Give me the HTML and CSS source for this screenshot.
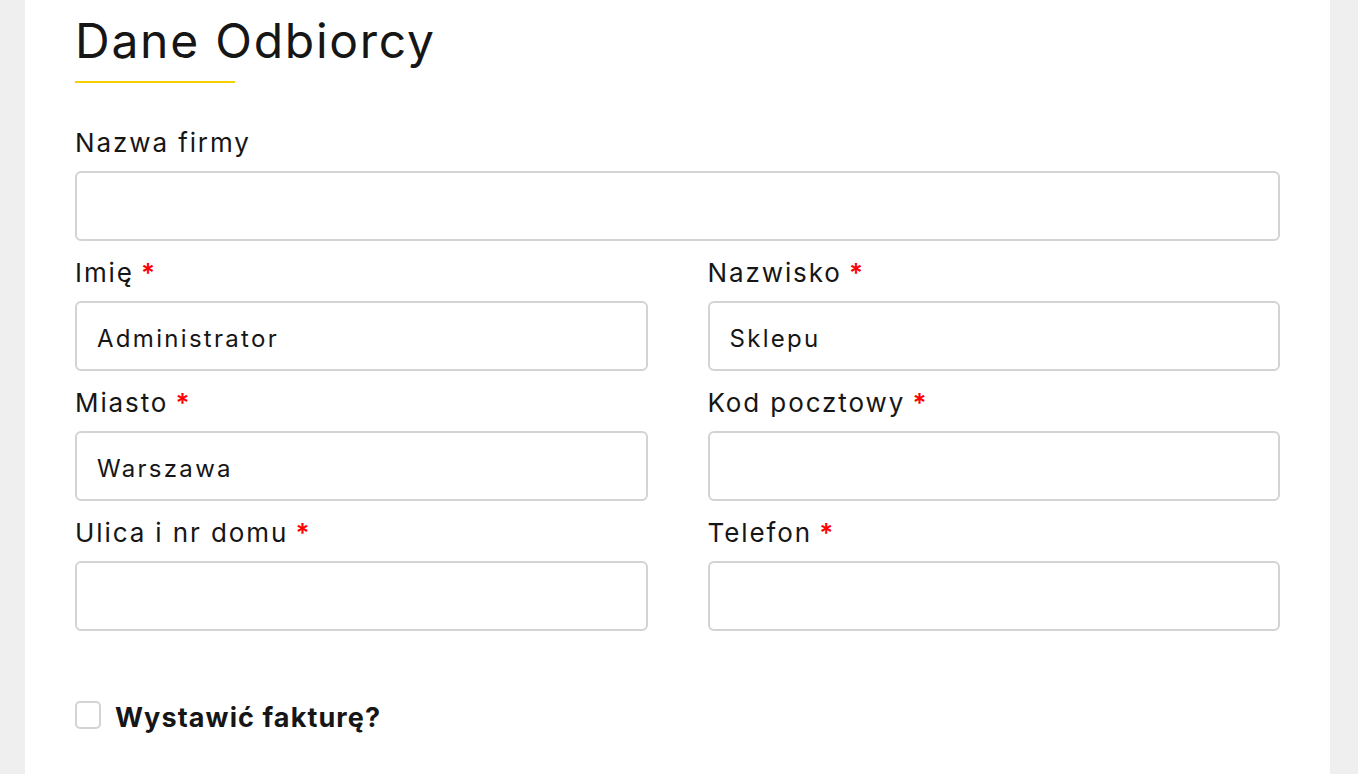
FILE: index.html
```html
<!DOCTYPE html>
<html lang="pl">
<head>
    <meta charset="UTF-8">
    <meta name="viewport" content="width=device-width, initial-scale=1.0">
    <title>Dane Odbiorcy</title>
    <link rel="stylesheet" href="styles.css">
</head>
<body>
    <div class="panel">
        <h2 class="section-title">Dane Odbiorcy</h2>

        <div class="field first">
            <label for="company">Nazwa firmy</label>
            <input id="company" type="text">
        </div>

        <div class="row">
            <div class="field">
                <label for="firstName">Imię <span class="req">*</span></label>
                <input id="firstName" type="text" value="Administrator">
            </div>
            <div class="field">
                <label for="lastName">Nazwisko <span class="req">*</span></label>
                <input id="lastName" type="text" value="Sklepu">
            </div>
        </div>

        <div class="row">
            <div class="field">
                <label for="city">Miasto <span class="req">*</span></label>
                <input id="city" type="text" value="Warszawa">
            </div>
            <div class="field">
                <label for="zip">Kod pocztowy <span class="req">*</span></label>
                <input id="zip" type="text">
            </div>
        </div>

        <div class="row">
            <div class="field">
                <label for="street">Ulica i nr domu <span class="req">*</span></label>
                <input id="street" type="text">
            </div>
            <div class="field">
                <label for="phone">Telefon <span class="req">*</span></label>
                <input id="phone" type="text">
            </div>
        </div>

        <label class="checkbox">
            <input type="checkbox" id="invoice">
            <span class="box"></span>
            <span class="checkbox-text">Wystawić fakturę?</span>
        </label>
    </div>
</body>
</html>
```

FILE: styles.css
```css
body { margin: 0; background: #efefef; font-family: Inter, "DejaVu Sans", sans-serif; color: #161616; }
.panel { background: #fff; margin-left: 25px; width: 1305px; box-sizing: border-box; padding: 12px 50px 40px; min-height: 774px; }
.section-title { margin: 0; font-size: 48px; font-weight: 400; line-height: 58px; letter-spacing: 1.75px; }
.section-title::after { content: ""; display: block; width: 160px; height: 2px; background: #f5d000; margin-top: 11px; }
.field { display: flex; flex-direction: column; margin-top: 17px; }
.field.first { margin-top: 45px; }
.field label { font-size: 26px; line-height: 30px; letter-spacing: 1.9px; margin-bottom: 13px; }
.field input { height: 70px; box-sizing: border-box; border: 2px solid #d3d3d3; border-radius: 6px; padding: 5px 20px 0; font-family: inherit; font-size: 24px; letter-spacing: 2.3px; color: #161616; outline: none; }
.req { color: #f00; font-size: 26px; font-weight: 600; letter-spacing: 0; margin-left: -2px; }
.row { display: grid; grid-template-columns: 1fr 1fr; column-gap: 60px; }
.checkbox { display: flex; align-items: flex-start; gap: 14px; margin-top: 70px; cursor: pointer; }
.checkbox input { display: none; }
.checkbox .box { width: 26px; height: 28px; box-sizing: border-box; border: 2px solid #d3d3d3; border-radius: 5px; }
.checkbox-text { font-size: 27px; line-height: 30px; font-weight: 700; letter-spacing: 1.1px; margin-top: 2px; }
```
